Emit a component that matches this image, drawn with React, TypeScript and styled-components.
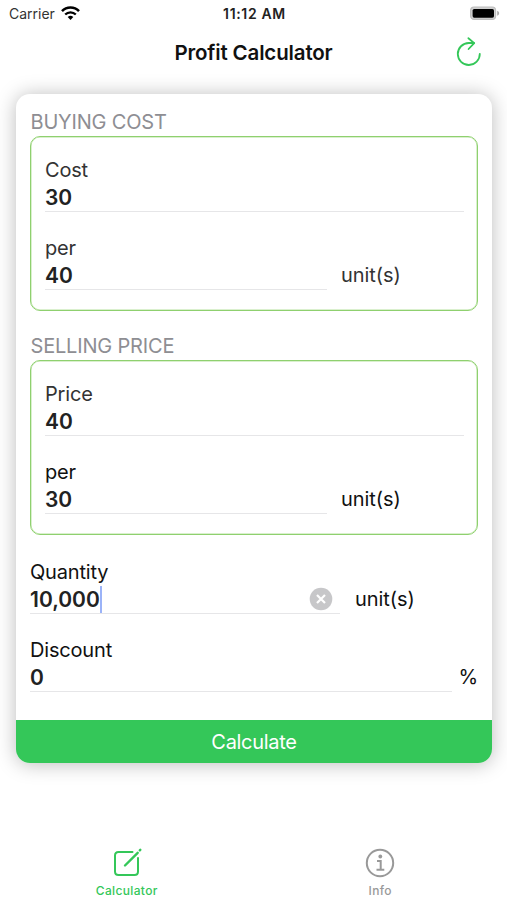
import React from "react";
import styled, { createGlobalStyle } from "styled-components";

const GREEN = "#34c759";

const GlobalStyle = createGlobalStyle`
  * { box-sizing: border-box; }
  html, body { margin: 0; padding: 0; background: #fff; }
  body { font-family: Inter, "Liberation Sans", sans-serif; color: #111; overflow: hidden; }
  button { font: inherit; border: 0; padding: 0; background: none; }
`;

const Screen = styled.div`
  display: flex;
  flex-direction: column;
  width: 507px;
  height: 900px;
  background: #fff;
`;

const StatusBar = styled.header`
  display: grid;
  grid-template-columns: 1fr auto 1fr;
  align-items: center;
  height: 27px;
  padding: 0 7px 0 9px;
  font-size: 14px;
`;

const Carrier = styled.div`
  display: flex;
  align-items: center;
  gap: 6px;
  color: #333;
  letter-spacing: 0;
`;

const Clock = styled.time`
  font-weight: 600;
  letter-spacing: 0.65px;
  color: #222;
`;

const Battery = styled.svg`
  justify-self: end;
`;

const NavBar = styled.nav`
  display: grid;
  grid-template-columns: 1fr auto 1fr;
  align-items: center;
  height: 51px;
  padding: 0 24px;
`;

const Title = styled.h1`
  grid-column: 2;
  margin: 0;
  font-size: 20.5px;
  font-weight: 600;
  letter-spacing: -0.15px;
`;

const RefreshButton = styled.button`
  justify-self: end;
  display: flex;
  margin-bottom: 2px;
  color: ${GREEN};
`;

const Card = styled.main`
  display: flex;
  flex-direction: column;
  height: 669px;
  margin: 16px 15px 0 16px;
  border-radius: 14px;
  background: #fff;
  overflow: hidden;
  box-shadow: 0 1px 20px rgba(0, 0, 0, 0.27);
`;

const Form = styled.div`
  flex: 1;
  padding: 14px 14px 0;
`;

const Section = styled.section`
  margin-bottom: 21px;

  &:last-of-type {
    margin-bottom: 24px;
  }
`;

const SectionTitle = styled.h2`
  margin: 0;
  padding-left: 0.5px;
  height: 28px;
  line-height: 28px;
  font-size: 20px;
  font-weight: 400;
  letter-spacing: -0.18px;
  color: #8e8e93;
`;

const Group = styled.div`
  height: 175px;
  padding: 20px 13px 0 14px;
  border: 1.5px solid #8fd06f;
  box-shadow: inset 0 0 0 0.5px #b5e19d;
  border-radius: 10px;
`;

const Field = styled.div`
  height: 78px;
`;

const Label = styled.label<{ $soft?: boolean }>`
  display: block;
  height: 27px;
  line-height: 27px;
  font-size: 20px;
  letter-spacing: -0.18px;
  color: ${(p) => (p.$soft ? "#333" : "#111")};
`;

const ValueRow = styled.div<{ $gap: number }>`
  display: flex;
  align-items: center;
  gap: ${(p) => p.$gap}px;
`;

const Input = styled.div<{ $width?: number }>`
  display: flex;
  align-items: center;
  flex: ${(p) => (p.$width ? `0 0 ${p.$width}px` : "1")};
  height: 28px;
  border-bottom: 1px solid #e6e6e8;
`;

const Value = styled.span`
  font-size: 21px;
  line-height: 26px;
  font-weight: 600;
  letter-spacing: 0;
  color: #222;
`;

const Caret = styled.span`
  width: 2px;
  height: 27px;
  background: #9bb3f8;
`;

const ClearButton = styled.button`
  display: flex;
  margin: 0 7px 1px auto;
`;

const Unit = styled.span<{ $soft?: boolean }>`
  margin-top: -3px;
  font-size: 20px;
  line-height: 26px;
  letter-spacing: -0.08px;
  color: ${(p) => (p.$soft ? "#333" : "#111")};
`;

const CalculateButton = styled.button`
  height: 43px;
  background: ${GREEN};
  color: #fff;
  font-size: 20px;
  letter-spacing: -0.3px;
`;

const TabBar = styled.nav`
  display: grid;
  grid-template-columns: 1fr 1fr;
  margin-top: auto;
  height: 54px;
`;

const Tab = styled.button<{ $active?: boolean }>`
  display: flex;
  flex-direction: column;
  align-items: center;
  gap: 5px;
  color: ${(p) => (p.$active ? GREEN : "#999")};
  font-size: 12px;
  line-height: 15px;
  font-weight: 500;
  letter-spacing: 0.35px;
`;

type FieldProps = {
  label: string;
  value: string;
  unit?: string;
  width?: number;
  gap?: number;
  softLabel?: boolean;
  editing?: boolean;
};

function NumberField({ label, value, unit, width, gap = 14, softLabel, editing }: FieldProps) {
  return (
    <Field>
      <Label $soft={softLabel}>{label}</Label>
      <ValueRow $gap={gap}>
        <Input $width={width}>
          <Value>{value}</Value>
          {editing && (
            <>
              <Caret />
              <ClearButton aria-label="Clear">
                <svg width="24" height="24" viewBox="0 0 24 24">
                  <circle cx="12" cy="12" r="11.3" fill="#c7c7c9" />
                  <path d="M8 8l8 8M16 8l-8 8" stroke="#fff" strokeWidth="2.2" />
                </svg>
              </ClearButton>
            </>
          )}
        </Input>
        {unit && <Unit $soft={softLabel}>{unit}</Unit>}
      </ValueRow>
    </Field>
  );
}

export default function App() {
  return (
    <Screen>
      <GlobalStyle />
      <StatusBar>
        <Carrier>
          Carrier
          <svg width="19" height="15" viewBox="0 0 19 15" fill="none" stroke="#000" strokeWidth="2.6">
            <path d="M1 5.1a12 12 0 0 1 17 0" />
            <path d="M4.2 8.5a7.5 7.5 0 0 1 10.6 0" strokeWidth="2.3" />
            <path d="M9.5 14L6.7 11a4 4 0 0 1 5.6 0z" fill="#000" stroke="none" />
          </svg>
        </Carrier>
        <Clock>11:12 AM</Clock>
        <Battery width="31" height="15" viewBox="0 0 31 15">
          <rect x="1.6" y="1" width="25" height="12.4" rx="3.5" fill="#d0d0d0" stroke="#bdbdbd" strokeWidth="1.2" />
          <rect x="3.6" y="2.9" width="21.4" height="8.8" rx="1.6" fill="#000" />
          <path d="M28.2 4.7c2.6 1 2.6 4 0 5z" fill="#aaa" />
        </Battery>
      </StatusBar>
      <NavBar>
        <Title>Profit Calculator</Title>
        <RefreshButton aria-label="Reset">
          <svg width="28" height="32" viewBox="0 0 28 32" fill="none" stroke="currentColor" strokeWidth="1.8" strokeLinecap="round" strokeLinejoin="round">
            <path d="M24.8 17.8A11 11 0 1 1 13.8 7H19" />
            <path d="M13.4 2.2L19.2 7.1L13.6 13" />
          </svg>
        </RefreshButton>
      </NavBar>
      <Card>
        <Form>
          <Section>
            <SectionTitle>BUYING COST</SectionTitle>
            <Group>
              <NumberField label="Cost" value="30" softLabel />
              <NumberField label="per" value="40" unit="unit(s)" width={282} softLabel />
            </Group>
          </Section>
          <Section>
            <SectionTitle>SELLING PRICE</SectionTitle>
            <Group>
              <NumberField label="Price" value="40" softLabel />
              <NumberField label="per" value="30" unit="unit(s)" width={282} />
            </Group>
          </Section>
          <NumberField label="Quantity" value="10,000" unit="unit(s)" width={310} gap={15} editing />
          <NumberField label="Discount" value="0" unit="%" gap={6} />
        </Form>
        <CalculateButton>Calculate</CalculateButton>
      </Card>
      <TabBar>
        <Tab $active>
          <svg width="32" height="32" viewBox="0 0 32 32" fill="none" stroke="currentColor" strokeWidth="2" strokeLinecap="round">
            <path d="M21.5 6H7.5Q4 6 4 9.5V25.5Q4 29 7.5 29H23.5Q27 29 27 25.5V12" />
            <path d="M14 19.5L26.7 6.8" strokeWidth="2.4" />
            <path d="M28.8 4.3L29.3 3.8" strokeWidth="2.4" />
          </svg>
          Calculator
        </Tab>
        <Tab>
          <svg width="32" height="32" viewBox="0 0 32 32" fill="none" stroke="currentColor" strokeWidth="2">
            <circle cx="16" cy="17" r="13.2" />
            <path d="M13 15H16.7V23.5M12.5 23.8H20.3" />
            <circle cx="16.3" cy="10.5" r="1.9" fill="currentColor" stroke="none" />
          </svg>
          Info
        </Tab>
      </TabBar>
    </Screen>
  );
}
